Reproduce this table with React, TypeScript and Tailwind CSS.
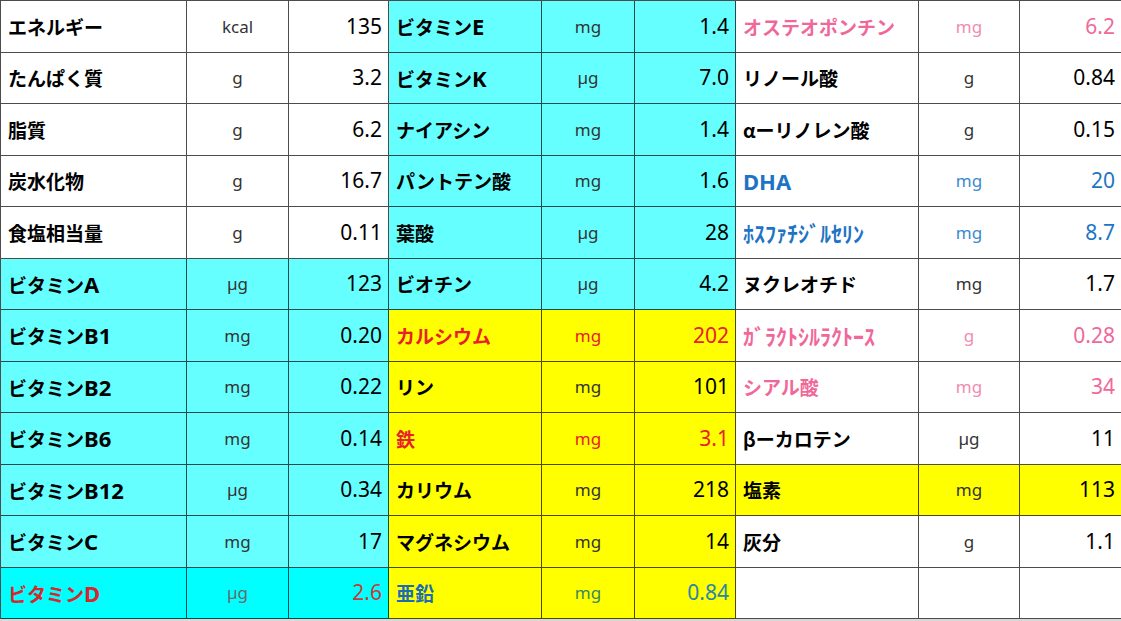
import React from "react";

type Cell = {
  name: string;
  unit: string;
  value: string;
  bg: string;
  nameC?: string;
  unitC?: string;
  valC?: string;
  half?: boolean;
};

const W = "bg-white";
const C = "bg-[#66ffff]";
const CD = "bg-[#00ffff]";
const Y = "bg-[#ffff00]";

const RED = "text-[#e8202a]";
const PINK = "text-[#f0689a]";
const PINKU = "text-[#f08cb0]";
const BLUE = "text-[#1e74c4]";
const BLUEU = "text-[#3a8ad0]";

const g1: Cell[] = [
  { name: "エネルギー", unit: "kcal", value: "135", bg: W },
  { name: "たんぱく質", unit: "g", value: "3.2", bg: W },
  { name: "脂質", unit: "g", value: "6.2", bg: W },
  { name: "炭水化物", unit: "g", value: "16.7", bg: W },
  { name: "食塩相当量", unit: "g", value: "0.11", bg: W },
  { name: "ビタミンA", unit: "µg", value: "123", bg: C },
  { name: "ビタミンB1", unit: "mg", value: "0.20", bg: C },
  { name: "ビタミンB2", unit: "mg", value: "0.22", bg: C },
  { name: "ビタミンB6", unit: "mg", value: "0.14", bg: C },
  { name: "ビタミンB12", unit: "µg", value: "0.34", bg: C },
  { name: "ビタミンC", unit: "mg", value: "17", bg: C },
  { name: "ビタミンD", unit: "µg", value: "2.6", bg: CD, nameC: "text-[#d8262c]", unitC: "text-[#6a6a6a]", valC: "text-[#c83a3a]" },
];

const g2: Cell[] = [
  { name: "ビタミンE", unit: "mg", value: "1.4", bg: C },
  { name: "ビタミンK", unit: "µg", value: "7.0", bg: C },
  { name: "ナイアシン", unit: "mg", value: "1.4", bg: C },
  { name: "パントテン酸", unit: "mg", value: "1.6", bg: C },
  { name: "葉酸", unit: "µg", value: "28", bg: C },
  { name: "ビオチン", unit: "µg", value: "4.2", bg: C },
  { name: "カルシウム", unit: "mg", value: "202", bg: Y, nameC: RED, unitC: RED, valC: RED },
  { name: "リン", unit: "mg", value: "101", bg: Y },
  { name: "鉄", unit: "mg", value: "3.1", bg: Y, nameC: RED, unitC: RED, valC: RED },
  { name: "カリウム", unit: "mg", value: "218", bg: Y },
  { name: "マグネシウム", unit: "mg", value: "14", bg: Y },
  { name: "亜鉛", unit: "mg", value: "0.84", bg: Y, nameC: "text-[#1a6cb4]", unitC: "text-[#3a8a5c]", valC: "text-[#2a86a8]" },
];

const g3: Cell[] = [
  { name: "オステオポンチン", unit: "mg", value: "6.2", bg: W, nameC: PINK, unitC: PINKU, valC: PINK },
  { name: "リノール酸", unit: "g", value: "0.84", bg: W },
  { name: "αーリノレン酸", unit: "g", value: "0.15", bg: W },
  { name: "DHA", unit: "mg", value: "20", bg: W, nameC: BLUE, unitC: BLUEU, valC: BLUE },
  { name: "ﾎｽﾌｧﾁｼﾞﾙｾﾘﾝ", unit: "mg", value: "8.7", bg: W, nameC: BLUE, unitC: BLUEU, valC: BLUE, half: true },
  { name: "ヌクレオチド", unit: "mg", value: "1.7", bg: W },
  { name: "ｶﾞﾗｸﾄｼﾙﾗｸﾄｰｽ", unit: "g", value: "0.28", bg: W, nameC: PINK, unitC: PINKU, valC: PINK, half: true },
  { name: "シアル酸", unit: "mg", value: "34", bg: W, nameC: PINK, unitC: PINKU, valC: PINK },
  { name: "βーカロテン", unit: "µg", value: "11", bg: W },
  { name: "塩素", unit: "mg", value: "113", bg: Y },
  { name: "灰分", unit: "g", value: "1.1", bg: W },
  { name: "", unit: "", value: "", bg: W },
];

const cellBase = "flex items-center border-r border-b border-black/70 overflow-hidden whitespace-nowrap";

function Name({ text }: { text: string }) {
  const parts = text.split(/([A-Za-z0-9]+)/).filter((p) => p.length > 0);
  return (
    <>
      {parts.map((p, i) =>
        /^[A-Za-z0-9]+$/.test(p) ? (
          <span key={i} className="text-[22px]" style={{ fontFamily: '"Noto Sans", sans-serif' }}>
            {p}
          </span>
        ) : (
          <span key={i}>{p}</span>
        )
      )}
    </>
  );
}

function Cells({ c }: { c: Cell }) {
  return (
    <>
      <div className={`${cellBase} ${c.bg} pl-[7px]`}>
        <span
          className={`font-bold leading-none ${c.half ? "text-[22px]" : "text-[19px]"} ${c.nameC ?? "text-black"}`}
          style={{ fontFamily: '"Noto Sans CJK JP", "Noto Sans", sans-serif' }}
        >
          <Name text={c.name} />
        </span>
      </div>
      <div className={`${cellBase} ${c.bg} justify-center`}>
        <span
          className={`text-[17px] ${c.unitC ?? "text-[#333333]"}`}
          style={{ fontFamily: '"Noto Sans", "Noto Sans CJK JP", sans-serif' }}
        >
          {c.unit}
        </span>
      </div>
      <div className={`${cellBase} ${c.bg} justify-end pr-[6px]`}>
        <span
          className={`text-[21px] ${c.valC ?? "text-black"}`}
          style={{ fontFamily: '"Noto Sans", "Noto Sans CJK JP", sans-serif' }}
        >
          {c.value}
        </span>
      </div>
    </>
  );
}

export default function App() {
  return (
    <div className="w-[1121px] h-[621px] bg-[#d8d8d8]">
      <div className="grid grid-cols-[186px_102px_100px_153px_93px_101px_183px_101px_102px] grid-rows-12 w-[1121px] h-[619px] border-t border-l border-black/70 bg-white">
        {g1.map((c, i) => (
          <React.Fragment key={i}>
            <Cells c={c} />
            <Cells c={g2[i]} />
            <Cells c={g3[i]} />
          </React.Fragment>
        ))}
      </div>
    </div>
  );
}
